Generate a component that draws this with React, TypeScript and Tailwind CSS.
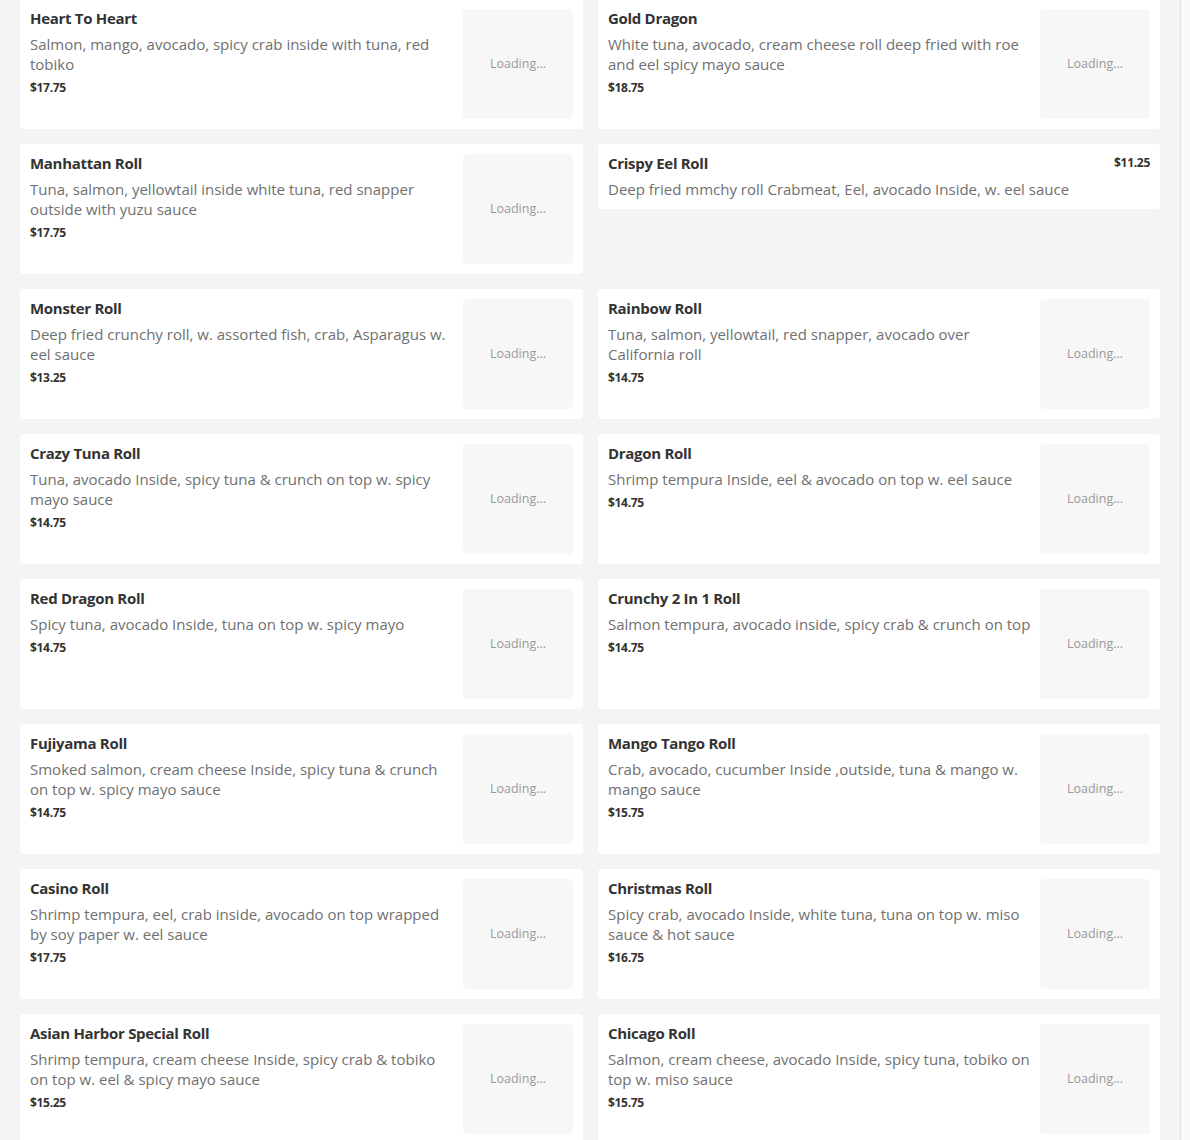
type Item = {
  name: string;
  desc: string;
  price: string;
  image?: boolean;
};

const items: Item[] = [
  { name: 'Heart To Heart', desc: 'Salmon, mango, avocado, spicy crab inside with tuna, red tobiko', price: '$17.75', image: true },
  { name: 'Gold Dragon', desc: 'White tuna, avocado, cream cheese roll deep fried with roe and eel spicy mayo sauce', price: '$18.75', image: true },
  { name: 'Manhattan Roll', desc: 'Tuna, salmon, yellowtail inside white tuna, red snapper outside with yuzu sauce', price: '$17.75', image: true },
  { name: 'Crispy Eel Roll', desc: 'Deep fried mmchy roll Crabmeat, Eel, avocado Inside, w. eel sauce', price: '$11.25' },
  { name: 'Monster Roll', desc: 'Deep fried crunchy roll, w. assorted fish, crab, Asparagus w. eel sauce', price: '$13.25', image: true },
  { name: 'Rainbow Roll', desc: 'Tuna, salmon, yellowtail, red snapper, avocado over California roll', price: '$14.75', image: true },
  { name: 'Crazy Tuna Roll', desc: 'Tuna, avocado Inside, spicy tuna & crunch on top w. spicy mayo sauce', price: '$14.75', image: true },
  { name: 'Dragon Roll', desc: 'Shrimp tempura Inside, eel & avocado on top w. eel sauce', price: '$14.75', image: true },
  { name: 'Red Dragon Roll', desc: 'Spicy tuna, avocado Inside, tuna on top w. spicy mayo', price: '$14.75', image: true },
  { name: 'Crunchy 2 In 1 Roll', desc: 'Salmon tempura, avocado inside, spicy crab & crunch on top', price: '$14.75', image: true },
  { name: 'Fujiyama Roll', desc: 'Smoked salmon, cream cheese Inside, spicy tuna & crunch on top w. spicy mayo sauce', price: '$14.75', image: true },
  { name: 'Mango Tango Roll', desc: 'Crab, avocado, cucumber Inside ,outside, tuna & mango w. mango sauce', price: '$15.75', image: true },
  { name: 'Casino Roll', desc: 'Shrimp tempura, eel, crab inside, avocado on top wrapped by soy paper w. eel sauce', price: '$17.75', image: true },
  { name: 'Christmas Roll', desc: 'Spicy crab, avocado Inside, white tuna, tuna on top w. miso sauce & hot sauce', price: '$16.75', image: true },
  { name: 'Asian Harbor Special Roll', desc: 'Shrimp tempura, cream cheese Inside, spicy crab & tobiko on top w. eel & spicy mayo sauce', price: '$15.25', image: true },
  { name: 'Chicago Roll', desc: 'Salmon, cream cheese, avocado Inside, spicy tuna, tobiko on top w. miso sauce', price: '$15.75', image: true },
];

const MenuCard = ({ item }: { item: Item }) => {
  if (!item.image) {
    return (
      <div className="bg-white rounded-[4px] p-[10px] flex flex-col">
        <div className="flex items-start justify-between">
          <h3 className="-mt-[1px] text-[15px] leading-[20px] font-bold text-[#333] tracking-[-0.3px]">{item.name}</h3>
          <span className="text-[12px] leading-[16px] font-bold text-[#333] tracking-[-0.3px] mt-[1px]">{item.price}</span>
        </div>
        <p className="mt-[6px] text-[15px] leading-[20px] text-[#707070]">{item.desc}</p>
      </div>
    );
  }
  return (
    <div className="bg-white rounded-[4px] p-[10px] flex gap-[6px] h-[130px]">
      <div className="flex-1 min-w-0 flex flex-col">
        <h3 className="-mt-[1px] text-[15px] leading-[20px] font-bold text-[#333] tracking-[-0.3px]">{item.name}</h3>
        <p className="mt-[6px] text-[15px] leading-[20px] text-[#707070]">{item.desc}</p>
        <span className="mt-[6px] text-[12px] leading-[16px] font-bold text-[#333] tracking-[-0.3px]">{item.price}</span>
      </div>
      <div className="w-[110px] h-[110px] shrink-0 rounded-[4px] bg-[#f7f7f7] flex items-center justify-center">
        <span className="text-[12.5px] text-[#999]">Loading...</span>
      </div>
    </div>
  );
};

export default function App() {
  return (
    <div
      className="flex w-[1190px] h-[1140px] overflow-hidden bg-[#f4f4f4]"
      style={{ fontFamily: '"Open Sans", "Liberation Sans", sans-serif' }}
    >
      <div className="flex-1 pl-[20px] pr-[20px] -mt-px">
        <div className="grid grid-cols-[563px_562px] gap-x-[15px] gap-y-[15px] items-start">
          {items.map((item) => (
            <MenuCard key={item.name} item={item} />
          ))}
        </div>
      </div>
      <div className="w-[10px] shrink-0 border-l border-[#e2e2e2] bg-[#f9f9f9]" />
    </div>
  );
}
